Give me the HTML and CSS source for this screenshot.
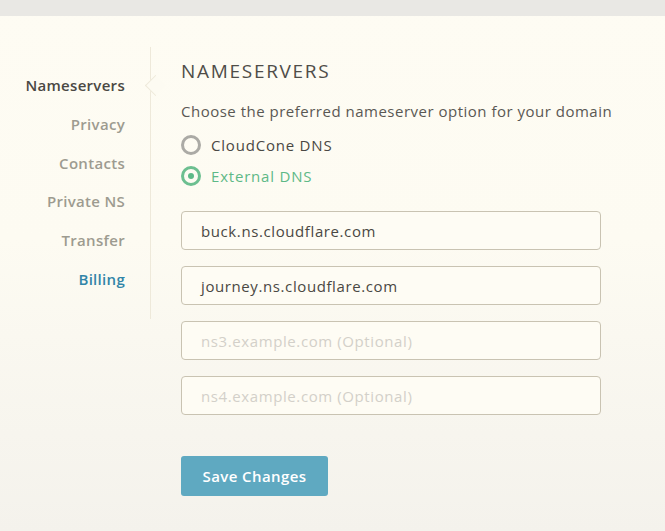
FILE: index.html
```html
<!DOCTYPE html>
<html>
<head>
<meta charset="utf-8">
<link rel="stylesheet" href="styles.css">
</head>
<body>
<div class="topbar"></div>
<div class="page">
  <nav class="sidebar">
    <a class="nav-item active">Nameservers</a>
    <a class="nav-item">Privacy</a>
    <a class="nav-item">Contacts</a>
    <a class="nav-item">Private NS</a>
    <a class="nav-item">Transfer</a>
    <a class="nav-item billing">Billing</a>
  </nav>
  <main class="content">
    <h2 class="title">NAMESERVERS</h2>
    <p class="desc">Choose the preferred nameserver option for your domain</p>
    <div class="radios">
      <label class="radio"><span class="circle"></span>CloudCone DNS</label>
      <label class="radio checked"><span class="circle"></span>External DNS</label>
    </div>
    <div class="fields">
      <div class="field">buck.ns.cloudflare.com</div>
      <div class="field">journey.ns.cloudflare.com</div>
      <div class="field placeholder">ns3.example.com (Optional)</div>
      <div class="field placeholder">ns4.example.com (Optional)</div>
    </div>
    <button class="save">Save Changes</button>
  </main>
</div>
</body>
</html>
```
FILE: styles.css
```css
html, body {
  margin: 0;
  height: 100%;
}
body {
  font-family: "Open Sans", "DejaVu Sans", sans-serif;
  background: linear-gradient(#fefcf3 0%, #fdfbf2 45%, #f4f2ec 100%);
  color: #4d4b46;
}
.topbar {
  height: 16px;
  background: #e9e8e4;
}
.page {
  display: flex;
  align-items: flex-start;
  padding-top: 31px;
}
.sidebar {
  width: 151px;
  box-sizing: border-box;
  display: flex;
  flex-direction: column;
  align-items: flex-end;
  padding: 19px 25px 20px 0;
  border-right: 1px solid #eee9da;
  position: relative;
}
.nav-item {
  font-size: 15px;
  line-height: 38.8px;
  color: #9d9b90;
  font-weight: 600;
  letter-spacing: 0.3px;
}
.nav-item.active {
  color: #4a4843;
  position: relative;
}
.nav-item.active::after {
  content: "";
  position: absolute;
  right: -38px;
  top: 12px;
  width: 14px;
  height: 14px;
  background: #fdfbf2;
  border-left: 1px solid #eee9da;
  border-bottom: 1px solid #eee9da;
  transform: rotate(45deg);
}
.nav-item.billing {
  color: #3185a8;
}
.content {
  padding-left: 30px;
  width: 420px;
}
.title {
  margin: 12px 0 0;
  font-size: 19px;
  font-weight: 400;
  letter-spacing: 1.7px;
  color: #4f4d48;
  line-height: 24px;
}
.desc {
  margin: 18px 0 0;
  font-size: 15px;
  line-height: 20px;
  letter-spacing: 0.5px;
  white-space: nowrap;
  color: #5a5853;
}
.radios {
  display: flex;
  flex-direction: column;
  gap: 11px;
  margin-top: 14px;
}
.radio {
  display: flex;
  align-items: center;
  gap: 10px;
  font-size: 15px;
  line-height: 20px;
  letter-spacing: 0.8px;
  color: #4a4843;
}
.circle {
  width: 20px;
  height: 20px;
  box-sizing: border-box;
  border: 3px solid #abaaa5;
  border-radius: 50%;
  position: relative;
  flex: none;
}
.radio.checked {
  color: #5db987;
}
.radio.checked .circle {
  border-color: #6cbf90;
}
.radio.checked .circle::after {
  content: "";
  position: absolute;
  left: 4px;
  top: 4px;
  width: 6px;
  height: 6px;
  border-radius: 50%;
  background: #5db987;
}
.fields {
  display: flex;
  flex-direction: column;
  gap: 16px;
  margin-top: 25px;
}
.field {
  height: 39px;
  box-sizing: border-box;
  border: 1px solid #c9c3b2;
  border-radius: 4px;
  padding: 0 19px;
  display: flex;
  align-items: center;
  font-size: 15px;
  letter-spacing: 0.6px;
  color: #4a4843;
  background: #fefcf4;
}
.field.placeholder {
  color: #d3d0c9;
}
.save {
  margin-top: 41px;
  width: 147px;
  height: 40px;
  border: none;
  border-radius: 3px;
  background: #5fa9c1;
  color: #ffffff;
  font-family: inherit;
  font-size: 15px;
  font-weight: 600;
  letter-spacing: 0.4px;
}
```
